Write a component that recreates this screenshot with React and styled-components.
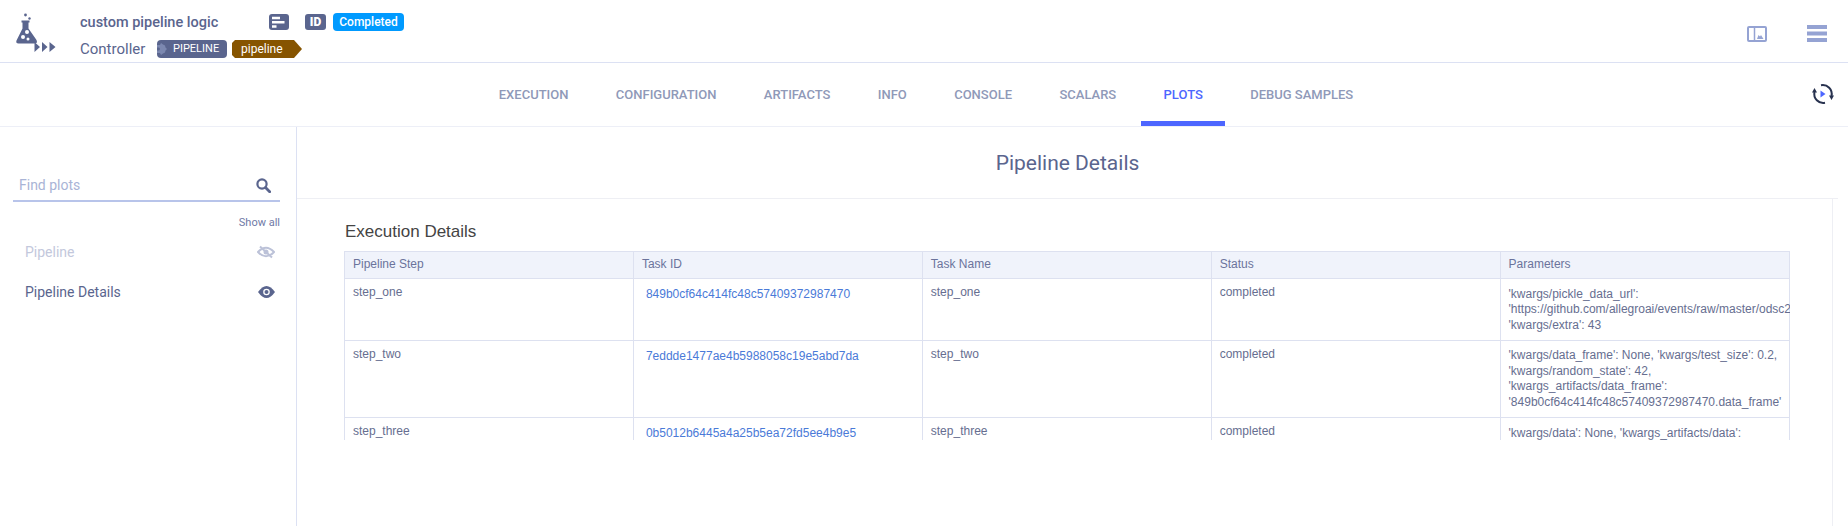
import React from 'react';
import styled, { createGlobalStyle } from 'styled-components';

const tabs = ['Execution', 'Configuration', 'Artifacts', 'Info', 'Console', 'Scalars', 'Plots', 'Debug Samples'];

const rows = [
    {
        step: 'step_one',
        id: '849b0cf64c414fc48c57409372987470',
        status: 'completed',
        params: ["'kwargs/pickle_data_url':", "'https://github.com/allegroai/events/raw/master/odsc2", "'kwargs/extra': 43"],
    },
    {
        step: 'step_two',
        id: '7eddde1477ae4b5988058c19e5abd7da',
        status: 'completed',
        params: ["'kwargs/data_frame': None, 'kwargs/test_size': 0.2,", "'kwargs/random_state': 42,", "'kwargs_artifacts/data_frame':", "'849b0cf64c414fc48c57409372987470.data_frame'"],
    },
    {
        step: 'step_three',
        id: '0b5012b6445a4a25b5ea72fd5ee4b9e5',
        status: 'completed',
        params: ["'kwargs/data': None, 'kwargs_artifacts/data':"],
    },
];

const App = () => {
    return (
        <Page>
            <GlobalStyle />
            <Header>
                <Logo viewBox="14 12 44 44">
                    <circle cx="25.5" cy="15" r="1.4" fill="#5a658e" />
                    <circle cx="29.5" cy="18.5" r="1.2" fill="#5a658e" />
                    <path d="M21.5 20.5h8v2h-1v6l8 11.500q1.500 3.500-2 3.500H18.500q-3 0-2-3l6-12v-6h-1z" fill="#5a658e" />
                    <circle cx="27" cy="32" r="2" fill="#fff" />
                    <circle cx="23" cy="37" r="2" fill="#fff" />
                    <circle cx="28" cy="39" r="1.500" fill="#fff" />
                    <path d="M34.500 42l5.500 5-5.500 5zM42 42l5.500 5-5.500 5zM49.500 42l6 5-6 5z" fill="#5a658e" />
                </Logo>
                <TitleBlock>
                    <TitleRow>
                        <TaskName>custom pipeline logic</TaskName>
                        <IconBadge>
                            <svg width="20" height="16" viewBox="0 0 20 16">
                                <path d="M3 2.800h8v2.500H3zM3 7h12.500v2.500H3zM3 11.200h4.500v2.500H3z" fill="#fff" />
                            </svg>
                        </IconBadge>
                        <IdBadge>ID</IdBadge>
                        <StatusBadge>Completed</StatusBadge>
                    </TitleRow>
                    <SubRow>
                        <TaskType>Controller</TaskType>
                        <PipelineTag>
                            <svg width="12" height="18" viewBox="0 0 12 18">
                                <path d="M0 5h3l1-2 2 1.500 2 1 .5 2L10 9l-1.500 1.500-.5 2-2 1L4 15l-1-2H0v-2.500h2q2-1.500 0-3H0z" fill="#7c88b0" />
                            </svg>
                            PIPELINE
                        </PipelineTag>
                        <SystemTag>pipeline</SystemTag>
                    </SubRow>
                </TitleBlock>
                <HeaderActions>
                    <svg width="20" height="16" viewBox="0 0 20 16">
                        <rect x="1" y="1" width="18" height="14" rx="1" fill="none" stroke="#95a3d3" strokeWidth="2" />
                        <path d="M7.500 1v14" stroke="#95a3d3" strokeWidth="1.500" />
                        <path d="M10 13l1.500-4 1.500 1.500 1-1.500 2.500 4z" fill="#95a3d3" />
                    </svg>
                    <svg width="20" height="17" viewBox="0 0 20 17">
                        <path d="M0 0h20v4H0zM0 6.500h20v4H0zM0 13h20v4H0z" fill="#95a3d3" />
                    </svg>
                </HeaderActions>
            </Header>
            <TabBar>
                <span />
                <TabList>
                    {tabs.map((tab) => (
                        <Tab key={tab} $active={tab === 'Plots'}>{tab}</Tab>
                    ))}
                </TabList>
                <RefreshSlot>
                    <svg width="22" height="22" viewBox="0 0 22 22">
                        <path d="M9 2.200A9 9 0 0 1 19.500 13M13 19.800A9 9 0 0 1 2.500 9" fill="none" stroke="#28324f" strokeWidth="2" />
                        <path d="M17 12.500h5L19.500 17zM0 9.500h5L2.500 5z" fill="#28324f" />
                        <path d="M8.500 7.500l5 3.500-5 3.500z" fill="#4d66ff" />
                    </svg>
                </RefreshSlot>
            </TabBar>
            <Body>
                <Sidebar>
                    <SearchBox>
                        <SearchInput placeholder="Find plots" />
                        <svg width="15" height="15" viewBox="0 0 15 15">
                            <circle cx="6" cy="6" r="4.600" fill="none" stroke="#5a658e" strokeWidth="2.200" />
                            <path d="M9.500 9.500l4.200 4.200" stroke="#5a658e" strokeWidth="2.800" strokeLinecap="round" />
                        </svg>
                    </SearchBox>
                    <ShowAll>Show all</ShowAll>
                    <PlotRow $hidden>
                        Pipeline
                        <svg width="18" height="14" viewBox="0 0 18 14">
                            <path d="M1 7q8-8.500 16 0-8 8.500-16 0z" fill="none" stroke="#bcc2d8" strokeWidth="2" />
                            <circle cx="9" cy="7" r="2.500" fill="#bcc2d8" />
                            <path d="M3 1.500l12 11" stroke="#bcc2d8" strokeWidth="2" />
                        </svg>
                    </PlotRow>
                    <PlotRow>
                        Pipeline Details
                        <svg width="17" height="12" viewBox="0 0 17 12">
                            <path d="M0 6q8.500-12 17 0-8.500 12-17 0z" fill="#5a658e" />
                            <circle cx="8.500" cy="6" r="3.300" fill="#fff" />
                            <circle cx="8.500" cy="6" r="2" fill="#5a658e" />
                        </svg>
                    </PlotRow>
                </Sidebar>
                <Main>
                    <PlotTitle>Pipeline Details</PlotTitle>
                    <PlotBody>
                        <TableTitle>Execution Details</TableTitle>
                        <TableClip>
                            <DetailsTable>
                                <thead>
                                    <tr>
                                        <Th>Pipeline Step</Th>
                                        <Th>Task ID</Th>
                                        <Th>Task Name</Th>
                                        <Th>Status</Th>
                                        <Th>Parameters</Th>
                                    </tr>
                                </thead>
                                <tbody>
                                    {rows.map((row) => (
                                        <tr key={row.step}>
                                            <Td>{row.step}</Td>
                                            <LinkCell>{row.id}</LinkCell>
                                            <Td>{row.step}</Td>
                                            <Td>{row.status}</Td>
                                            <ParamCell>
                                                {row.params.map((line) => (
                                                    <ParamLine key={line}>{line}</ParamLine>
                                                ))}
                                            </ParamCell>
                                        </tr>
                                    ))}
                                </tbody>
                            </DetailsTable>
                        </TableClip>
                    </PlotBody>
                </Main>
            </Body>
        </Page>
    );
};

const GlobalStyle = createGlobalStyle`
    html, body {
        margin: 0;
        padding: 0;
        background: #fff;
    }

    * {
        box-sizing: border-box;
    }
`;

const Page = styled.div`
    display: flex;
    flex-direction: column;
    width: 1848px;
    height: 526px;
    overflow: hidden;
    font-family: Roboto, "Liberation Sans", sans-serif;
    color: #5a658e;
`;

const Header = styled.header`
    display: flex;
    align-items: flex-start;
    height: 63px;
    border-bottom: 1px solid #dce1f3;
    padding: 12px 21px 0 14px;
`;

const Logo = styled.svg`
    width: 44px;
    height: 44px;
    flex: none;
`;

const TitleBlock = styled.div`
    display: flex;
    flex-direction: column;
    margin-left: 22px;
`;

const TitleRow = styled.div`
    display: flex;
    align-items: center;
    height: 20px;
`;

const TaskName = styled.div`
    width: 189px;
    font-size: 14.5px;
    font-weight: 500;
`;

const IconBadge = styled.div`
    display: flex;
    width: 20px;
    height: 16px;
    margin-right: 16px;
    border-radius: 3px;
    background: #5a658e;
`;

const IdBadge = styled.div`
    width: 21px;
    height: 16px;
    margin-right: 7px;
    border-radius: 3px;
    background: #5a658e;
    color: #fff;
    font-size: 12px;
    font-weight: 900;
    line-height: 16px;
    text-align: center;
`;

const StatusBadge = styled.div`
    width: 71px;
    height: 18px;
    border-radius: 4px;
    background: #009aff;
    color: #fff;
    font-size: 12px;
    font-weight: 500;
    line-height: 18px;
    text-align: center;
`;

const SubRow = styled.div`
    display: flex;
    align-items: center;
    height: 18px;
    margin-top: 8px;
`;

const TaskType = styled.div`
    width: 77px;
    font-size: 15px;
`;

const PipelineTag = styled.div`
    display: flex;
    align-items: center;
    gap: 4px;
    width: 70px;
    height: 18px;
    border-radius: 4px;
    background: #5a658e;
    color: #fff;
    font-size: 11px;
    line-height: 18px;
`;

const SystemTag = styled.div`
    width: 70px;
    height: 18px;
    margin-left: 5px;
    padding-left: 9px;
    background: #865400;
    clip-path: polygon(0 3px, 3px 0, 62px 0, 70px 9px, 62px 18px, 3px 18px, 0 15px);
    color: #fff;
    font-size: 12px;
    line-height: 18px;
`;

const HeaderActions = styled.div`
    display: flex;
    align-items: center;
    gap: 40px;
    height: 17px;
    margin-top: 13px;
    margin-left: auto;
`;

const TabBar = styled.nav`
    display: grid;
    grid-template-columns: 1fr auto 1fr;
    height: 64px;
    border-bottom: 1px solid #edeff7;
`;

const TabList = styled.div`
    display: flex;
    padding-left: 4px;
`;

const Tab = styled.div`
    display: flex;
    align-items: center;
    height: 63px;
    margin: 0 1.2px;
    padding: 5px 22.5px 0;
    border-bottom: 5px solid ${(props) => (props.$active ? '#4d66ff' : 'transparent')};
    color: ${(props) => (props.$active ? '#4d66ff' : '#8f99b8')};
    font-size: 13px;
    font-weight: 500;
    text-transform: uppercase;
`;

const RefreshSlot = styled.div`
    display: flex;
    align-items: center;
    justify-content: flex-end;
    padding-right: 14px;
    padding-bottom: 2px;
`;

const Body = styled.div`
    display: flex;
    flex: 1;
    min-height: 0;
`;

const Sidebar = styled.aside`
    width: 297px;
    flex: none;
    padding: 43px 16px 0 13px;
    border-right: 1px solid #dce1f3;
`;

const SearchBox = styled.div`
    display: flex;
    align-items: center;
    height: 32px;
    padding: 0 9px 0 6px;
    border-bottom: 2px solid #b8c4ea;
`;

const SearchInput = styled.input`
    flex: 1;
    min-width: 0;
    padding: 0;
    border: none;
    outline: none;
    background: transparent;
    color: #5a658e;
    font-family: inherit;
    font-size: 14px;

    &::placeholder {
        color: #a9b4d6;
        opacity: 1;
    }
`;

const ShowAll = styled.div`
    height: 30px;
    padding-top: 14px;
    color: #6f7aa6;
    font-size: 11px;
    line-height: 14px;
    text-align: right;
`;

const PlotRow = styled.div`
    display: flex;
    align-items: center;
    justify-content: space-between;
    height: 40px;
    padding: 0 5px 0 12px;
    color: ${(props) => (props.$hidden ? '#c3c8dc' : '#5a658e')};
    font-size: 14px;
`;

const Main = styled.main`
    display: flex;
    flex: 1;
    flex-direction: column;
    min-width: 0;
    padding-right: 10px;
`;

const PlotTitle = styled.div`
    height: 72px;
    padding-top: 24px;
    border-bottom: 1px solid #eeeff4;
    color: #5a658e;
    font-size: 21px;
    line-height: 24px;
    text-align: center;
`;

const PlotBody = styled.div`
    flex: 1;
    margin-right: 5px;
    padding: 23px 0 0 47px;
    border-right: 1px solid #eeeff4;
`;

const TableTitle = styled.div`
    height: 29px;
    padding-left: 1px;
    color: #444;
    font-family: "Liberation Sans", Arial, sans-serif;
    font-size: 17px;
    line-height: 20px;
`;

const TableClip = styled.div`
    width: 1446px;
    height: 189px;
    overflow: hidden;
`;

const DetailsTable = styled.table`
    width: 1445.5px;
    border-collapse: collapse;
    table-layout: fixed;
    font-family: "Liberation Sans", Arial, sans-serif;
    font-size: 12px;
    line-height: 15.6px;
`;

const Th = styled.th`
    height: 27px;
    padding: 0 8px;
    border: 1px solid #dde1f0;
    background: #f0f3fb;
    color: #6b739b;
    font-weight: 400;
    text-align: left;
`;

const Td = styled.td`
    padding: 6px 8px;
    border: 1px solid #dde1f0;
    color: #666e90;
    vertical-align: top;
`;

const LinkCell = styled(Td)`
    padding: 8px 12px;
    color: #4a7ad8;
`;

const ParamCell = styled(Td)`
    padding: 7.5px 8px 6.5px;
`;

const ParamLine = styled.div`
    white-space: nowrap;
`;

export default App;
